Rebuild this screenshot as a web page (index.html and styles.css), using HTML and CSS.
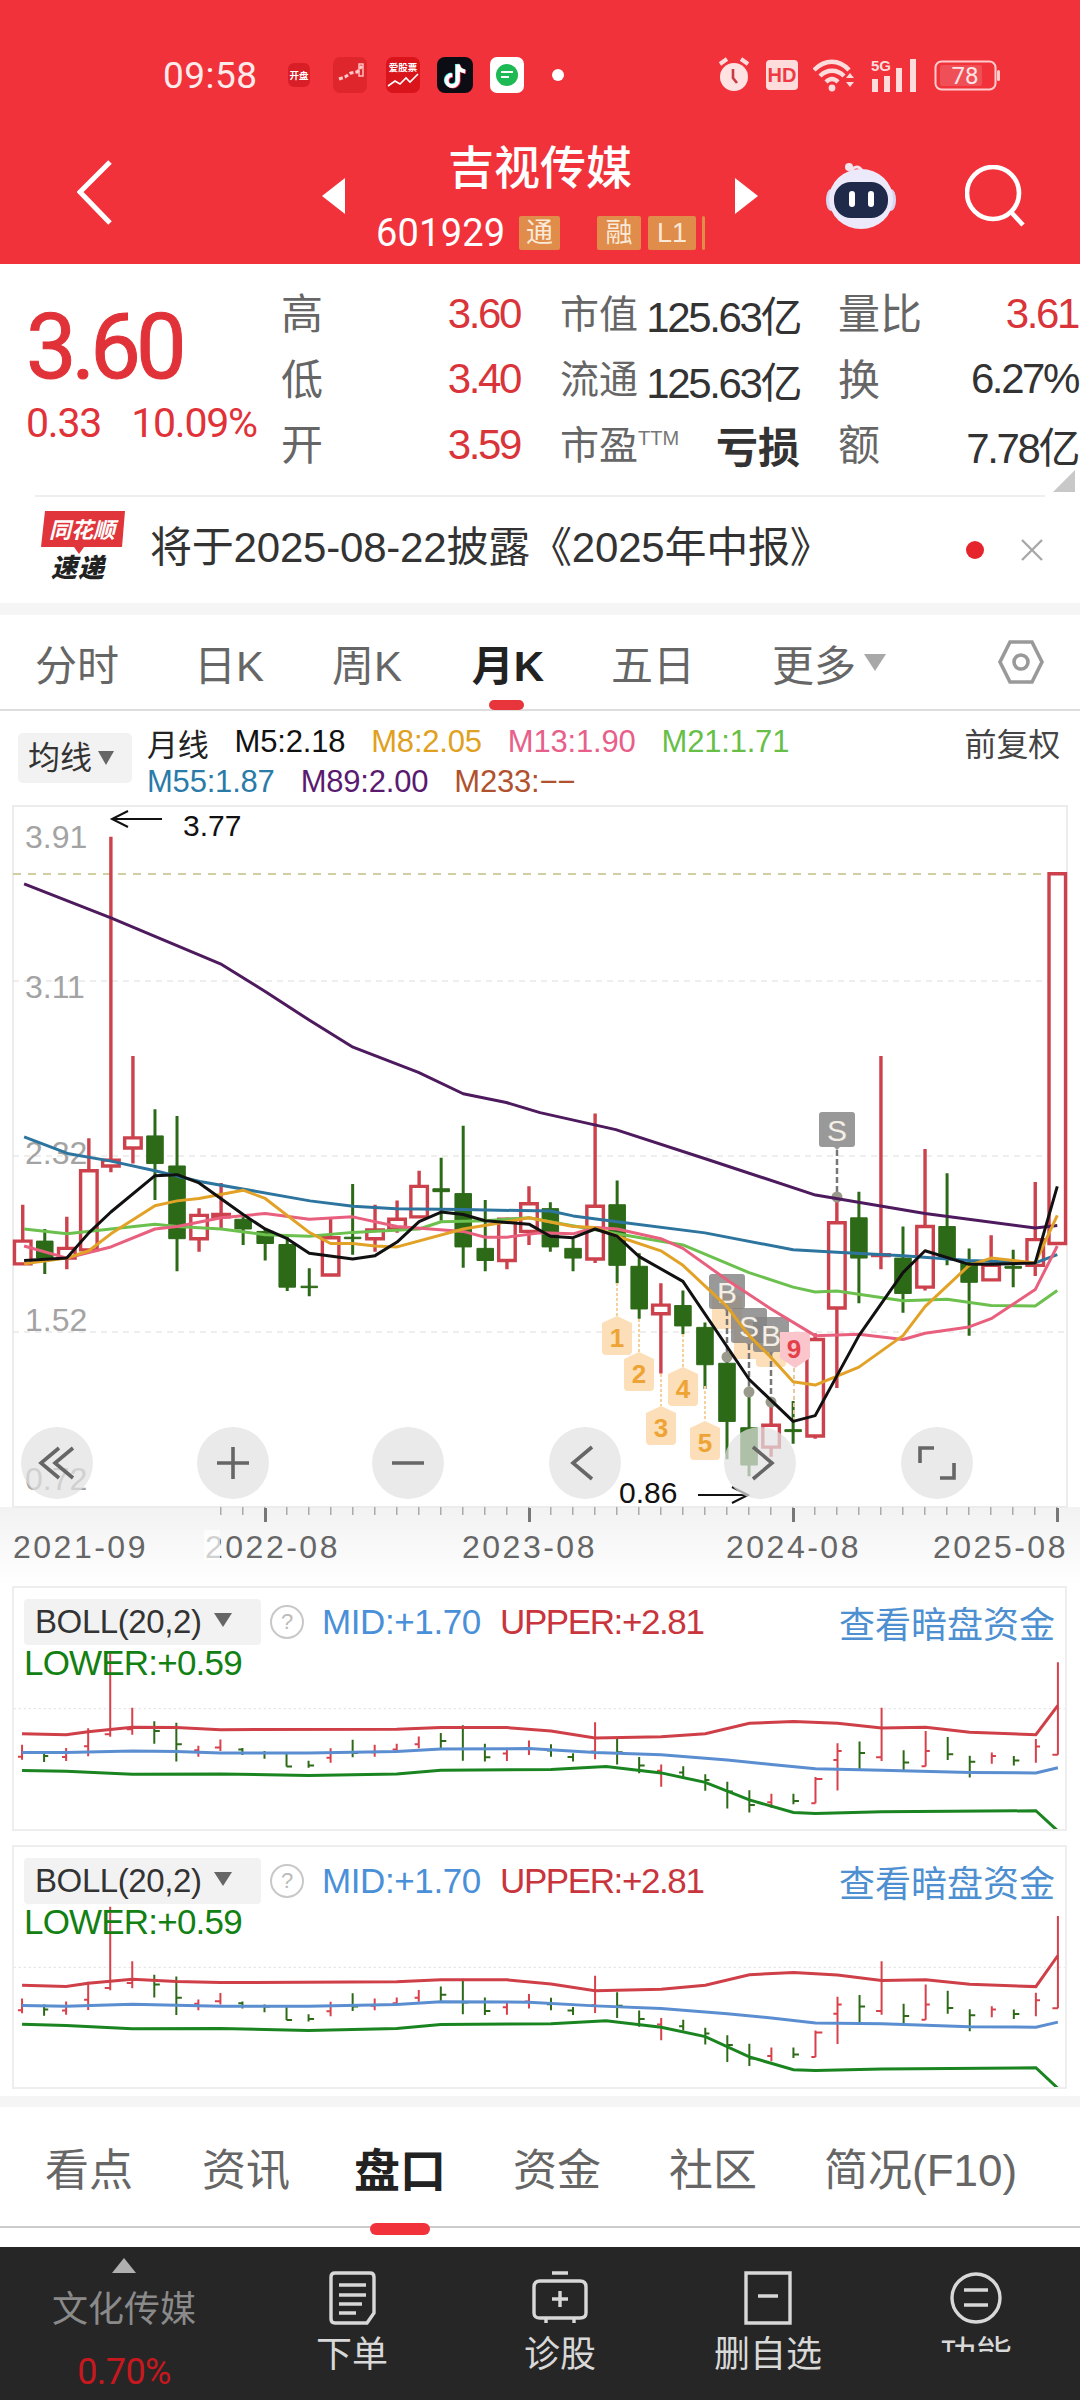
FILE: index.html
```html
<!DOCTYPE html>
<html lang="zh">
<head>
<meta charset="utf-8">
<title>吉视传媒</title>
<link rel="stylesheet" href="styles.css">
</head>
<body>
<div class="page">

<header class="head">
  <div class="status">
    <span class="time">09:58</span>
    <svg class="app a1" viewBox="0 0 22 24"><rect width="22" height="24" rx="6" fill="#d81e26"/><text class="apptxt" x="11" y="16" font-size="9.5">开盘</text></svg>
    <svg class="app a2" viewBox="0 0 34 36"><rect width="34" height="36" rx="7" fill="#e0262d"/><path class="spark" d="M6 22l6-2 6-4 6-1 5-6"/><rect x="26" y="7" width="4" height="12" class="sparkbox"/></svg>
    <svg class="app a3" viewBox="0 0 34 36"><rect width="34" height="36" rx="7" fill="#d9141b"/><text class="apptxt" x="17" y="14" font-size="9.5">爱股票</text><path class="spark2" d="M2 29l7-5 5 3 6-6 4 4 8-8"/></svg>
    <svg class="app a4" viewBox="0 0 36 36"><rect width="36" height="36" rx="8" fill="#0c0c14"/><path class="tk1" d="M20 7v16a5.6 5.6 0 1 1-5.6-5.6M20 7c.6 4 3.4 6.6 7.4 7"/><path class="tk2" d="M21.6 8v16a5.6 5.6 0 1 1-5.6-5.6M21.6 8c.6 4 3.4 6.6 7.4 7"/><path class="tk3" d="M20.8 7.5v16a5.6 5.6 0 1 1-5.6-5.6M20.8 7.5c.6 4 3.4 6.6 7.4 7"/></svg>
    <svg class="app a5" viewBox="0 0 34 36"><rect width="34" height="36" rx="7" fill="#fff"/><circle cx="17" cy="18" r="11" fill="#1db954"/><path class="gl" d="M11 15h12M11 20h8"/></svg>
    <i class="dot"></i>
    <div class="sys">
      <svg class="alarm" viewBox="0 0 34 36"><path class="alarm-h" d="M3 7l7-5M31 7l-7-5"/><circle cx="17" cy="20" r="14" fill="#ffe2e2"/><path class="alarm-p" d="M16 12v9l4 5"/></svg>
      <svg class="hd" viewBox="0 0 32 30"><rect width="32" height="30" rx="4" fill="#ffdcdc"/><text class="hdtxt" x="16" y="22">HD</text></svg>
      <svg class="wifi" viewBox="0 0 43 34"><path class="wf" d="M1 12c11-11 25-11 35 0M7 18c7-7 17-7 24 0M13 24c4-4 8-4 12 0"/><circle cx="19" cy="30" r="3.4" fill="#ffdcdc"/><path d="M33 20h8l-4-5zM33 24h8l-4 5z" fill="#ffdcdc"/></svg>
      <svg class="signal" viewBox="0 0 48 34"><text class="fg" x="0" y="13">5G</text><path class="bars" d="M4 34V21M16 34V18M28 34V10M42 34V1"/></svg>
      <svg class="batt" viewBox="0 0 66 31"><rect x="1.5" y="1.5" width="60" height="28" rx="6" class="batt-o"/><rect x="6" y="5" width="42" height="21" rx="2" fill="#ef5058"/><rect x="63" y="10" width="3" height="11" rx="1.5" fill="#ffcccc"/><text class="batt-t" x="31" y="24">78</text></svg>
    </div>
  </div>
  <div class="nav">
    <svg class="back" viewBox="0 0 35 65"><path d="M33 2L3 32l30 31"/></svg>
    <i class="tri tri-l"></i>
    <div class="center">
      <div class="title">吉视传媒</div>
      <div class="coderow">
        <span class="code">601929</span>
        <span class="bdg b-tong">通</span>
        <span class="bdg b-rong">融</span>
        <span class="bdg b-l1">L1</span>
        <span class="bdg b-end"></span>
      </div>
    </div>
    <i class="tri tri-r"></i>
    <svg class="robot" viewBox="0 0 72 70">
      <path class="ant" d="M27 13c-1-7 8-8 10-2"/><circle cx="24" cy="7" r="4" fill="#f4e4ee"/>
      <ellipse cx="6" cy="40" rx="5" ry="11" fill="#d9d6f0"/><ellipse cx="66" cy="40" rx="5" ry="11" fill="#d9d6f0"/>
      <ellipse cx="36" cy="39" rx="32" ry="30" fill="#ece9fa"/>
      <rect x="9" y="22" width="54" height="36" rx="17" fill="#1f2a4a"/>
      <rect x="24" y="31" width="6" height="16" rx="3" fill="#fff"/><rect x="43" y="31" width="6" height="16" rx="3" fill="#fff"/>
    </svg>
    <svg class="search" viewBox="0 0 60 62"><circle cx="28" cy="28" r="26"/><path d="M46 47l12 13"/></svg>
  </div>
</header>

<section class="quote">
  <div class="price">
    <div class="big">3.60</div>
    <div class="chg"><span>0.33</span><span>10.09%</span></div>
  </div>
  <div class="stats">
    <span class="k">高</span><span class="v red">3.60</span><span class="k2">市值</span><span class="v">125.63亿</span><span class="k3">量比</span><span class="v red">3.61</span>
    <span class="k">低</span><span class="v red">3.40</span><span class="k2">流通</span><span class="v">125.63亿</span><span class="k3">换</span><span class="v">6.27%</span>
    <span class="k">开</span><span class="v red">3.59</span><span class="k2">市盈<sup class="ttm">TTM</sup></span><span class="v strong">亏损</span><span class="k3">额</span><span class="v">7.78亿</span>
  </div>
  <i class="corner"></i>
</section>

<section class="promo">
  <svg class="logo" viewBox="0 0 90 74"><path d="M7 0h80l-3 36H46l-5 7-5-7H3z" fill="#e0353a"/><text class="lg1" x="44" y="27">同花顺</text><text class="lg2" x="40" y="66">速递</text></svg>
  <span class="promo-t">将于2025-08-22披露《2025年中报》</span>
  <i class="reddot"></i>
  <svg class="close" viewBox="0 0 24 24"><path d="M2 2l20 20M22 2L2 22"/></svg>
</section>
<div class="gap"></div>

<nav class="tabs">
  <span class="tab">分时</span>
  <span class="tab">日K</span>
  <span class="tab">周K</span>
  <span class="tab on">月K</span>
  <span class="tab">五日</span>
  <span class="tab more">更多<i class="drop"></i></span>
  <svg class="gear" viewBox="0 0 46 46"><path d="M12 3h22l10 20-10 20H12L2 23z"/><circle cx="23" cy="23" r="7"/></svg>
</nav>

<section class="legend">
  <div class="ma-btn">均线<i class="drop small"></i></div>
  <div class="ma-rows">
    <div class="ma-row"><span class="ma-n">月线</span><span class="c5">M5:2.18</span><span class="c8">M8:2.05</span><span class="c13">M13:1.90</span><span class="c21">M21:1.71</span><span class="fq">前复权</span></div>
    <div class="ma-row"><span class="c55">M55:1.87</span><span class="c89">M89:2.00</span><span class="c233">M233:−−</span></div>
  </div>
</section>

<section class="main">
<svg class="mainsvg" viewBox="0 805 1080 781">
  <defs>
    <linearGradient id="strip" x1="0" y1="0" x2="0" y2="1"><stop offset="0" stop-color="#f2f2f2"/><stop offset="1" stop-color="#ffffff"/></linearGradient>
    <path id="tag" d="M0-20L15-13V15Q15 19 11 19H-11Q-15 19-15 15V-13z"/>
    <path id="mark" d="M-15-18H15Q18-18 18-15V14Q18 17 15 17H3L0 20-3 17H-15Q-18 17-18 14V-15Q-18-18-15-18z"/>
  </defs>
  <rect class="strip" x="0" y="1507" width="1080" height="79"/>
  <rect class="frame" x="13" y="806" width="1054" height="701"/>
  <line class="g-top" x1="13" y1="874" x2="1067" y2="874"/>
  <line class="g" x1="13" y1="981" x2="1067" y2="981"/>
  <line class="g" x1="13" y1="1156" x2="1067" y2="1156"/>
  <line class="g" x1="13" y1="1332" x2="1067" y2="1332"/>
  <text class="yl" x="25" y="848">3.91</text>
  <text class="yl" x="25" y="998">3.11</text>
  <text class="yl" x="25" y="1164">2.32</text>
  <text class="yl" x="25" y="1331">1.52</text>
  <text class="yl" x="25" y="1490">0.72</text>

  <g transform="translate(0 800) scale(.34439 .48473)">
    <path class="wick-r" d="M66 835V957M194 860V968M258 698V930M322 76V768M386 528V750M578 842V932M642 790V885M960 862V982M1089 835V932M1153 826V893M1217 765V862M1472 862V968M1536 797V918M1728 647V955M1919 997V1183M2239 1240V1355M2367 1100V1318M2430 820V1213M2558 528V968M2686 720V1012M2878 898V992M3006 788V982"/>
    <path class="body-r" d="M42 910H90V957H42ZM170 925H218V945H170ZM234 765H282V928H234ZM298 743H346V755H298ZM362 697H410V718H362ZM554 857H602V905H554ZM618 855H666V860H618ZM936 903H984V980H936ZM1065 887H1113V905H1065ZM1129 865H1177V885H1129ZM1193 797H1241V860H1193ZM1448 865H1496V950H1448ZM1512 833H1560V890H1512ZM1704 838H1752V947H1704ZM1895 1042H1943V1060H1895ZM2215 1290H2263V1335H2215ZM2343 1113H2391V1312H2343ZM2406 872H2454V1048H2406ZM2534 938H2582V940H2534ZM2662 880H2710V1005H2662ZM2854 960H2902V990H2854ZM2982 907H3030V960H2982ZM3046 152H3094V915H3046Z"/>
    <path class="wick-g" d="M130 885V978M450 638V825M514 652V972M706 860V918M770 885V950M834 900V1013M898 966V1024M1024 792V938M1281 738V868M1345 672V965M1409 825V972M1598 830V932M1664 905V972M1792 785V997M1856 935V1070M1983 1012V1102M2047 1078V1215M2111 1140V1360M2175 1210V1395M2303 1240V1328M2494 808V1038M2622 880V1058M2750 770V960M2814 925V1105M2942 928V1005"/>
    <path class="body-g" d="M106 910H154V945H106ZM426 693H474V750H426ZM490 755H538V905H490ZM682 865H730V885H682ZM746 890H794V915H746ZM810 917H858V1005H810ZM874 1003H922V1006H874ZM1000 902H1048V905H1000ZM1257 802H1305V808H1257ZM1321 812H1369V922H1321ZM1385 925H1433V950H1385ZM1574 843H1622V922H1574ZM1640 925H1688V945H1640ZM1768 835H1816V960H1768ZM1832 962H1880V1050H1832ZM1959 1043H2007V1085H1959ZM2023 1088H2071V1165H2023ZM2087 1162H2135V1282H2087ZM2151 1295H2199V1372H2151ZM2279 1299H2327V1303H2279ZM2470 862H2518V945H2470ZM2598 945H2646V1018H2598ZM2726 880H2774V945H2726ZM2790 955H2838V995H2790ZM2918 962H2966V966H2918Z"/>
  </g>

  <g class="dots">
    <path d="M617 1283V1316M639 1319V1352M661 1374V1406M683 1334V1367M705 1386V1421"/>
  </g>
  <g class="tags">
    <use href="#tag" x="617" y="1336"/><use href="#tag" x="639" y="1372"/><use href="#tag" x="661" y="1426"/><use href="#tag" x="683" y="1387"/><use href="#tag" x="705" y="1441"/>
    <use href="#tag" x="727" y="1310"/><use href="#tag" x="749" y="1340"/><use href="#tag" x="771" y="1348"/>
  </g>
  <g class="tagnum">
    <text x="617" y="1347">1</text><text x="639" y="1383">2</text><text x="661" y="1437">3</text><text x="683" y="1398">4</text><text x="705" y="1452">5</text>
  </g>
  <path class="dashg" d="M727 1310V1352M749 1344V1388M771 1352V1398M837 1150V1192"/>
  <path class="dashp" d="M794 1368V1420"/>
  <g class="gdot"><circle cx="727" cy="1357" r="5.5"/><circle cx="749" cy="1392" r="5.5"/><circle cx="771" cy="1402" r="5.5"/><circle cx="837" cy="1197" r="5.5"/></g>

  <g class="marks">
    <use href="#mark" x="727" y="1292"/><use href="#mark" x="749" y="1326"/><use href="#mark" x="771" y="1335"/><use href="#mark" x="837" y="1130"/>
  </g>
  <path class="pink" d="M780 1332H810V1358L795 1368 780 1358z"/>
  <g class="marktxt">
    <text x="727" y="1303">B</text><text x="749" y="1337">S</text><text x="771" y="1346">B</text><text x="837" y="1141">S</text>
  </g>
  <text class="nine" x="794" y="1358">9</text>

  <g transform="translate(0 800) scale(.34439 .48473)" class="lines">
    <polyline class="m89" points="70,173 322,243 640,338 770,395 900,455 1025,510 1215,562 1345,606 1470,624 1568,645 1788,680 2048,740 2368,815 2686,853 3006,883 3070,878"/>
    <polyline class="m55" points="70,695 200,730 322,745 450,765 580,787 900,827 1025,838 1150,843 1345,845 1598,848 1664,858 1792,870 2047,893 2303,928 2430,933 2622,940 2814,950 3006,955 3070,938"/>
    <polyline class="m21" points="70,885 194,895 322,885 450,875 514,880 642,885 770,897 898,900 1024,892 1217,885 1281,870 1409,868 1536,862 1598,870 1792,895 1983,918 2175,975 2303,1005 2367,1015 2430,1013 2622,1033 2750,1030 2878,1043 3006,1044 3070,1012"/>
    <polyline class="m13" points="70,920 194,945 322,922 450,885 514,880 642,862 770,853 898,865 1024,860 1153,880 1345,890 1409,902 1472,902 1568,893 1664,895 1728,882 1792,885 1919,905 1983,925 2111,990 2239,1050 2367,1105 2494,1102 2622,1113 2686,1100 2814,1087 2878,1070 3006,1010 3070,920"/>
    <polyline class="m8" points="70,957 194,945 258,930 322,895 450,837 514,827 578,822 706,805 770,822 898,892 960,915 1024,915 1089,920 1153,922 1345,885 1472,870 1536,862 1664,880 1728,882 1792,900 1919,930 1983,960 2111,1045 2175,1105 2239,1150 2303,1200 2367,1207 2494,1170 2622,1105 2686,1045 2814,960 2878,945 3006,955 3070,857"/>
    <polyline class="m5" points="70,950 194,945 258,893 322,850 450,775 514,773 578,790 706,855 770,885 834,905 898,935 1024,947 1089,940 1153,912 1217,870 1281,850 1345,855 1409,868 1536,875 1598,900 1664,903 1728,885 1792,900 1856,942 1983,993 2175,1195 2303,1282 2367,1270 2494,1105 2622,975 2686,930 2814,958 2878,958 3006,955 3070,797"/>
  </g>

  <path class="arrow" d="M162 819H112M128 811L112 819 128 827"/>
  <text class="px" x="183" y="836">3.77</text>
  <text class="px" x="619" y="1503">0.86</text>
  <path class="arrow" d="M698 1495H748M732 1487L748 1495 732 1503"/>

  <line class="minor" x1="220" y1="1511" x2="1060" y2="1511"/>
  <line class="major" x1="264" y1="1515" x2="1060" y2="1515"/>
  <text class="xl" x="13" y="1558">2021-09</text>
  <text class="xl" x="205" y="1558">2022-08</text>
  <rect class="fade" x="204" y="1530" width="16" height="30"/>
  <text class="xl" x="462" y="1558">2023-08</text>
  <text class="xl" x="726" y="1558">2024-08</text>
  <text class="xl" x="933" y="1558">2025-08</text>

  <g class="rb">
    <circle cx="57" cy="1463" r="36"/><circle cx="233" cy="1463" r="36"/><circle cx="408" cy="1463" r="36"/><circle cx="585" cy="1463" r="36"/><circle cx="760" cy="1463" r="36"/><circle cx="937" cy="1463" r="36"/>
  </g>
  <path class="rbi" d="M59 1448L41 1463 59 1478M73 1448L55 1463 73 1478M217 1463H249M233 1447V1479M392 1463H424M592 1447L573 1463 592 1479M753 1447L772 1463 753 1479M920 1463V1448H934M954 1463V1478H940"/>
</svg>
</section>

<section class="panel p1">
  <svg class="pchart" viewBox="20.3 53 1526 713" preserveAspectRatio="none">
    <defs>
      <g id="mini">
        <path class="mw-r" d="M32 517V561M32 552h-6M96 526V565M96 553h-6M128 468V551M128 521h-6M160 246V493M160 486h-8M192 407V487M192 471h-8M288 520V552M288 533h-6M320 501V535M320 525h-8M480 527V570M480 555h-6M544 517V552M544 539h-6M576 514V538M576 531h-6M608 492V527M608 515h-6M736 527V565M736 543h-6M768 504V547M768 526h-6M864 450V560M864 537h-6M960 575V641M960 594h-6M1120 662V703M1120 687h-6M1184 612V690M1184 618h10M1184 690h-6M1216 512V652M1216 535h6M1216 562h-6M1280 407V565M1280 554h-8M1344 476V580M1344 535h6M1344 580h-6M1440 540V573M1440 550h6M1504 500V570M1504 522h6M1536 273V546M1536 546h-8"/>
        <path class="mw-g" d="M64 535V568M64 550h6M224 447V514M224 476h8M256 452V566M256 515h8M352 526V547M352 531h-6M384 535V558M384 541h8M416 540V581M416 581h8M448 564V585M448 578h8M512 502V554M512 541h8M640 482V529M640 506h8M672 459V564M672 529h8M704 514V566M704 554h8M800 515V552M800 534h-6M832 542V566M832 553h-8M896 499V575M896 539h8M928 553V601M928 578h8M992 580V612M992 599h-6M1024 604V653M1024 621h6M1056 626V705M1056 655h8M1088 651V717M1088 695h8M1152 662V693M1152 683h8M1248 507V590M1248 541h8M1312 533V597M1312 569h8M1376 494V562M1376 545h8M1408 549V614M1408 567h8M1472 550V578M1472 563h8"/>
      </g>
    </defs>
    <line class="pg" x1="20" y1="410" x2="1546" y2="410"/>
    <use href="#mini"/>
    <polyline class="lr" points="32,484 96,487 128,478 192,465 256,466 320,472 576,471 640,466 736,466 800,476 864,497 960,493 1024,484 1088,453 1152,448 1216,453 1280,467 1344,465 1408,480 1504,487 1536,400"/>
    <polyline class="lb" points="32,540 96,540 192,535 256,537 320,541 448,541 576,537 640,529 768,528 864,540 960,546 1056,562 1120,575 1184,588 1280,592 1408,599 1504,600 1536,585"/>
    <polyline class="lg" points="32,593 96,595 192,604 320,603 448,608 576,603 640,592 800,590 880,581 960,600 1024,628 1088,680 1152,717 1184,720 1280,715 1504,712 1536,772"/>
  </svg>
  <div class="pinfo">
    <div class="prow">
      <div class="boll">BOLL(20,2)<i class="drop small2"></i></div>
      <span class="q">?</span>
      <span class="mid">MID:+1.70</span>
      <span class="up">UPPER:+2.81</span>
      <span class="dark">查看暗盘资金</span>
    </div>
    <div class="low">LOWER:+0.59</div>
  </div>
</section>

<section class="panel p2">
  <svg class="pchart" viewBox="20.3 819 1526 710" preserveAspectRatio="none">
    <line class="pg" x1="20" y1="1175" x2="1546" y2="1175"/>
    <use href="#mini" y="750"/>
    <polyline class="lr" points="32,1228 96,1232 128,1222 192,1210 256,1217 320,1220 576,1218 640,1212 736,1212 800,1224 864,1244 960,1240 1024,1228 1088,1197 1152,1190 1216,1198 1280,1214 1344,1212 1408,1225 1504,1232 1536,1140"/>
    <polyline class="lb" points="32,1288 96,1290 192,1284 256,1287 320,1290 448,1290 576,1285 640,1277 768,1278 864,1289 960,1297 1056,1312 1120,1325 1184,1340 1280,1342 1408,1351 1504,1352 1536,1337"/>
    <polyline class="lg" points="32,1343 96,1347 192,1357 320,1356 448,1362 576,1356 640,1344 800,1342 880,1333 960,1352 1024,1380 1088,1440 1152,1478 1184,1480 1280,1476 1504,1472 1536,1533"/>
  </svg>
  <div class="pinfo">
    <div class="prow">
      <div class="boll">BOLL(20,2)<i class="drop small2"></i></div>
      <span class="q">?</span>
      <span class="mid">MID:+1.70</span>
      <span class="up">UPPER:+2.81</span>
      <span class="dark">查看暗盘资金</span>
    </div>
    <div class="low">LOWER:+0.59</div>
  </div>
</section>

<div class="gap2"></div>

<nav class="btabs">
  <span class="bt">看点</span>
  <span class="bt">资讯</span>
  <span class="bt on">盘口</span>
  <span class="bt">资金</span>
  <span class="bt">社区</span>
  <span class="bt">简况(F10)</span>
</nav>
<div class="btgap"></div>

<footer class="foot">
  <div class="f0">
    <i class="up-tri"></i>
    <div class="f0-name">文化传媒</div>
    <div class="f0-pct">0.70%</div>
  </div>
  <div class="fi">
    <svg class="fic" viewBox="0 0 47 54"><path d="M6 2H41Q45 2 45 6V42L38 52H6Q2 52 2 48V6Q2 2 6 2z"/><path d="M10 14H37M10 24H37M10 33H33M10 42H27"/></svg>
    <span>下单</span>
  </div>
  <div class="fi">
    <svg class="fic" viewBox="0 0 56 54"><path d="M20 2H36M8 10H48Q54 10 54 16V42Q54 47 48 47H8Q2 47 2 42V16Q2 10 8 10zM14 47V52M42 47V52M28 20V36M20 28H36"/></svg>
    <span>诊股</span>
  </div>
  <div class="fi">
    <svg class="fic" viewBox="0 0 48 54"><path d="M2 2H46V52H2zM14 25H34"/></svg>
    <span>删自选</span>
  </div>
  <div class="fi">
    <svg class="fic" viewBox="0 0 52 54"><circle cx="26" cy="27" r="24"/><path d="M14 19H38M14 34H38"/></svg>
    <span>功能</span>
  </div>
  <i class="footmask"></i>
</footer>

</div>
</body>
</html>
```

FILE: styles.css
```css
* { box-sizing: border-box; }
html, body { margin: 0; padding: 0; background: #fff; }
body { font-family: "Liberation Sans", "Noto Sans CJK SC", sans-serif; color: #333; }
.page { width: 1080px; height: 2400px; overflow: hidden; position: relative; }
i { display: block; font-style: normal; }

/* header */
.head { height: 264px; background: #f1323b; color: #fff; }
.status { height: 100px; padding-top: 50px; display: flex; align-items: center; padding-left: 163px; }
.time { font: 37px "Roboto", sans-serif; color: #fdeaea; width: 95px; white-space: nowrap; letter-spacing: .5px; }
.app { display: block; flex: none; }
.a1 { width: 22px; height: 24px; margin-left: 30px; }
.a2 { width: 34px; height: 36px; margin-left: 23px; }
.a3 { width: 34px; height: 36px; margin-left: 19px; }
.a4 { width: 36px; height: 36px; margin-left: 17px; }
.a5 { width: 34px; height: 36px; margin-left: 17px; }
.apptxt { fill: #fff; text-anchor: middle; font-family: "Noto Sans CJK SC", sans-serif; font-weight: 700; }
.spark { fill: none; stroke: #ffc9c9; stroke-width: 3; stroke-dasharray: 4 2; }
.sparkbox { fill: none; stroke: #ffc9c9; stroke-width: 1.4; }
.spark2 { fill: none; stroke: #fff; stroke-width: 1.6; }
.tk1, .tk2, .tk3 { fill: none; stroke-width: 4; }
.tk1 { stroke: #25f4ee; }
.tk2 { stroke: #fe2c55; }
.tk3 { stroke: #fff; }
.gl { stroke: #fff; stroke-width: 2; fill: none; }
.dot { width: 12px; height: 12px; border-radius: 50%; background: #fff; margin-left: 28px; }
.sys { margin-left: auto; margin-right: 80px; display: flex; align-items: center; gap: 15px; }
.alarm { width: 34px; height: 36px; }
.alarm-h { stroke: #ffdcdc; stroke-width: 4; fill: none; }
.alarm-p { stroke: #c93c44; stroke-width: 2.6; fill: none; }
.hd { width: 32px; height: 30px; }
.hdtxt { font: 700 20px "Liberation Sans", sans-serif; fill: #ee3a42; text-anchor: middle; }
.wifi { width: 43px; height: 34px; }
.wf { fill: none; stroke: #ffdcdc; stroke-width: 4.4; }
.signal { width: 48px; height: 34px; }
.fg { font: 700 15px "Liberation Sans", sans-serif; fill: #ffdcdc; }
.bars { stroke: #ffdcdc; stroke-width: 6; fill: none; }
.batt { width: 66px; height: 31px; }
.batt-o { fill: none; stroke: #ffcccc; stroke-width: 2; }
.batt-t { font: 24px "Roboto", sans-serif; fill: #ffe5e5; text-anchor: middle; }

.nav { height: 164px; display: flex; align-items: flex-start; }
.back { width: 35px; height: 65px; margin: 60px 0 0 77px; flex: none; fill: none; stroke: #fff; stroke-width: 5; }
.tri { width: 0; height: 0; flex: none; margin-top: 78px; border-top: 18px solid transparent; border-bottom: 18px solid transparent; }
.tri-l { margin-left: 210px; border-right: 23px solid #fff; }
.tri-r { border-left: 23px solid #fff; }
.center { width: 390px; flex: none; margin-top: 40px; }
.title { font-size: 46px; line-height: 56px; text-align: center; font-weight: 500; }
.coderow { display: flex; align-items: center; height: 34px; margin-top: 20px; padding-left: 31px; }
.code { width: 143px; font: 38px "Roboto", sans-serif; letter-spacing: .2px; flex: none; }
.bdg { height: 34px; background: #e08c4a; color: #fbe9d8; border-radius: 2px; font-size: 27px; line-height: 34px; text-align: center; flex: none; overflow: hidden; }
.b-tong { width: 41px; }
.b-rong { width: 44px; margin-left: 37px; }
.b-l1 { width: 48px; margin-left: 7px; }
.b-end { width: 3px; margin-left: 6px; }
.robot { width: 72px; height: 70px; margin: 60px 0 0 67px; flex: none; }
.ant { fill: none; stroke: #f4e4ee; stroke-width: 3; }
.search { width: 60px; height: 62px; margin: 65px 0 0 68px; flex: none; fill: none; stroke: #fff; stroke-width: 4.6; }

/* quote */
.quote { height: 231px; display: flex; position: relative; color: #333; }
.price { width: 281px; padding: 45px 0 0 26px; flex: none; }
.big { font: 400 90px/78px "Roboto", sans-serif; color: #e03238; letter-spacing: -5px; -webkit-text-stroke: 1px #e03238; height: 78px; overflow: visible; }
.chg { display: flex; gap: 30px; margin-top: 14px; font: 41px/44px "Roboto", sans-serif; color: #e03238; letter-spacing: -1.2px; white-space: nowrap; }
.stats { display: grid; grid-template-columns: 100px 139px 40px 92px 148px 38px 100px 140px; grid-auto-rows: 65.5px; margin-top: 17px; align-items: center; }
.k { font-size: 42px; color: #666; padding-bottom: 6px; }
.k2 { grid-column: 4; font-size: 39px; color: #666; white-space: nowrap; padding-bottom: 6px; }
.k3 { font-size: 42px; color: #666; grid-column: 7; padding-bottom: 6px; }
.k ~ .v:nth-child(6n+2) { grid-column: 2; }
.v { font-size: 42px; justify-self: end; white-space: nowrap; letter-spacing: -2.4px; color: #333; }
.v:nth-child(6n+4) { grid-column: 5; }
.v:nth-child(6n) { grid-column: 8; }
.red { color: #d9343a; }
.strong { font-weight: 700; letter-spacing: 0; font-size: 42px; }
.ttm { font-size: 20px; vertical-align: 14px; line-height: 0; color: #777; }
.corner { position: absolute; left: 1053px; top: 206px; width: 0; height: 0; border-left: 22px solid transparent; border-bottom: 22px solid #c8c8c8; }

/* promo */
.promo { height: 108px; margin: 0 35px; border-top: 2px solid #eee; display: flex; align-items: center; position: relative; }
.logo { width: 90px; height: 74px; margin: -4px 0 0 3px; flex: none; }
.lg1 { font: italic 700 22px "Noto Sans CJK SC", sans-serif; fill: #fff; text-anchor: middle; }
.lg2 { font: italic 900 26px "Noto Sans CJK SC", sans-serif; fill: #222; text-anchor: middle; letter-spacing: 1px; }
.promo-t { font-size: 42px; line-height: 48px; color: #333; margin: -4px 0 0 22px; white-space: nowrap; letter-spacing: -.2px; }
.reddot { width: 18px; height: 18px; border-radius: 50%; background: #e5252b; margin-left: auto; }
.close { width: 24px; height: 24px; margin: 0 1px 0 36px; flex: none; fill: none; stroke: #a8a8a8; stroke-width: 2.4; }
.gap { height: 12px; background: #f5f5f5; }

/* tabs */
.tabs { height: 96px; display: grid; grid-template-columns: 154px 150px 126px 156px 134px 188px 1fr; align-items: center; border-bottom: 2px solid #ddd; }
.tab { font-size: 42px; color: #666; text-align: center; display: flex; justify-content: center; align-items: center; position: relative; white-space: nowrap; }
.tab.more { padding-left: 30px; }
.tab.on { color: #222; font-weight: 700; }
.tab.on::after { content: ""; position: absolute; left: 59px; top: 68px; width: 35px; height: 10px; border-radius: 5px; background: #e8353c; }
.drop { width: 0; height: 0; margin-left: 8px; border-left: 11px solid transparent; border-right: 11px solid transparent; border-top: 17px solid #a8a8a8; }
.drop.small { display: inline-block; margin-left: 6px; vertical-align: 4px; border-left-width: 8px; border-right-width: 8px; border-top-width: 14px; border-top-color: #666; }
.drop.small2 { display: inline-block; margin-left: 12px; vertical-align: 6px; border-left-width: 9px; border-right-width: 9px; border-top-width: 14px; border-top-color: #666; }
.gear { width: 46px; height: 46px; margin-left: 90px; fill: none; stroke: #999; stroke-width: 3.6; }

/* legend */
.legend { height: 94px; display: flex; }
.ma-btn { width: 114px; height: 50px; margin: 22px 0 0 18px; background: #f2f2f2; border-radius: 5px; font-size: 32px; line-height: 50px; color: #333; padding-left: 10px; white-space: nowrap; }
.ma-rows { margin-left: 15px; flex: 1; padding-top: 11px; }
.ma-row { display: flex; gap: 26px; height: 40px; align-items: center; font-size: 31px; letter-spacing: -.2px; white-space: nowrap; }
.ma-n { font-size: 31px; color: #222; }
.c5 { color: #111; }
.c8 { color: #e0a020; }
.c13 { color: #e8608a; }
.c21 { color: #68bf48; }
.c55 { color: #2a7ba8; }
.c89 { color: #5a1a70; }
.c233 { color: #b0522e; }
.fq { margin-left: auto; margin-right: 20px; font-size: 32px; color: #444; }

/* main chart */
.main { height: 781px; }
.mainsvg { display: block; width: 1080px; height: 781px; }
.strip { fill: url(#strip); }
.frame { fill: #fff; stroke: #ececec; stroke-width: 2; }
.g-top { stroke: #c4bd84; stroke-width: 1.5; stroke-dasharray: 8 7; }
.g { stroke: #ddd; stroke-width: 1; stroke-dasharray: 6 5; }
.yl { font: 32px "Liberation Sans", sans-serif; fill: #a3a3a3; }
.wick-r, .wick-g, .body-r, .body-g, .lines polyline { vector-effect: non-scaling-stroke; }
.wick-r { stroke: #cc414b; stroke-width: 3.4; fill: none; }
.wick-g { stroke: #2d6a18; stroke-width: 3; fill: none; }
.body-r { fill: #fff; stroke: #cc414b; stroke-width: 3.4; }
.body-g { fill: #2d6a18; stroke: #2d6a18; stroke-width: 1; }
.lines polyline { fill: none; stroke-width: 3; stroke-linejoin: round; }
.m89 { stroke: #4e1a5e; }
.m55 { stroke: #2d759f; }
.m21 { stroke: #6cc04e; }
.m13 { stroke: #e8607e; }
.m8 { stroke: #e2a227; }
.m5 { stroke: #111; }
.dots { stroke: #f6cf9c; stroke-width: 2; stroke-dasharray: 3 2; fill: none; }
.tags { fill: #fcdfb8; }
.tagnum text { font: 700 26px "Liberation Sans", sans-serif; fill: #eea435; text-anchor: middle; }
.dashg { stroke: #777; stroke-width: 2.5; stroke-dasharray: 6 3; fill: none; }
.dashp { stroke: #e8c8a0; stroke-width: 2; stroke-dasharray: 4 3; fill: none; }
.gdot { fill: #9a9a8c; }
.marks { fill: rgba(130, 130, 130, .82); }
.marktxt text { font: 30px "Liberation Sans", sans-serif; fill: #f4efe6; text-anchor: middle; }
.pink { fill: #fbc6cb; }
.nine { font: 700 26px "Liberation Sans", sans-serif; fill: #e4404a; text-anchor: middle; }
.arrow { fill: none; stroke: #111; stroke-width: 2; }
.px { font: 30px "Liberation Sans", sans-serif; fill: #111; }
.minor { stroke: #aaa; stroke-width: 8; stroke-dasharray: 1.5 20.5; }
.major { stroke: #777; stroke-width: 14; stroke-dasharray: 3 261; }
.xl { font: 32px "Liberation Sans", sans-serif; fill: #666; letter-spacing: 2.5px; }
.fade { fill: rgba(255, 255, 255, .7); }
.rb { fill: rgba(226, 226, 226, .72); }
.rbi { fill: none; stroke: #666; stroke-width: 3.6; }

/* sub panels */
.panel { height: 245px; margin: 0 13px 14px 12px; border: 2px solid #eee; display: grid; }
.panel > * { grid-area: 1 / 1; }
.p2 { height: 244px; margin-bottom: 0; }
.pchart { width: 1051px; height: 100%; display: block; }
.pchart path, .pchart polyline, .pchart line { vector-effect: non-scaling-stroke; fill: none; }
.mw-r { stroke: #d8404a; stroke-width: 2; }
.mw-g { stroke: #2d6a18; stroke-width: 2; }
.pg { stroke: #ddd; stroke-width: 1; stroke-dasharray: 2 3; }
.lr { stroke: #cf3f48; stroke-width: 3; }
.lb { stroke: #5b8ed0; stroke-width: 3; }
.lg { stroke: #1a8420; stroke-width: 3; }
.pinfo { padding: 11px 0 0 10px; }
.prow { display: flex; align-items: center; height: 46px; font-size: 35px; letter-spacing: -.4px; white-space: nowrap; }
.boll { width: 237px; height: 46px; background: #f2f2f2; border-radius: 4px; padding-left: 11px; font-size: 33px; line-height: 46px; color: #333; white-space: nowrap; }
.q { width: 34px; height: 34px; margin-left: 9px; border: 2px solid #c8c8c8; border-radius: 50%; color: #bbb; font-size: 22px; line-height: 30px; text-align: center; letter-spacing: 0; }
.mid { margin-left: 18px; color: #4a90d9; width: 178px; }
.up { color: #c8353d; letter-spacing: -1.4px; }
.dark { margin-left: auto; margin-right: 10px; font-size: 36px; color: #4d8fd0; letter-spacing: 0; }
.low { font-size: 35px; color: #128012; line-height: 36px; margin-top: 0; letter-spacing: -.8px; }

/* bottom tabs */
.gap2 { height: 18px; border-bottom: 11px solid #f5f5f5; }
.btabs { height: 121px; border-bottom: 2px solid #ccc; display: grid; grid-template-columns: 178px 136px 172px 142px 170px 1fr; align-items: center; }
.bt { font-size: 44px; color: #666; text-align: center; white-space: nowrap; position: relative; }
.bt:last-child { text-align: left; padding-left: 26px; font-size: 44px; }
.bt.on { color: #222; font-weight: 700; font-size: 46px; }
.bt.on::after { content: ""; position: absolute; left: 56px; top: 89px; width: 60px; height: 12px; border-radius: 6px; background: #f1323b; }
.btgap { height: 19px; }

/* footer */
.foot { height: 153px; background: #262626; display: flex; position: relative; overflow: hidden; }
.f0 { width: 248px; flex: none; text-align: center; padding-top: 11px; }
.up-tri { width: 0; height: 0; margin: 0 auto; border-left: 12px solid transparent; border-right: 12px solid transparent; border-bottom: 15px solid #b0b0b0; }
.f0-name { font-size: 36px; line-height: 44px; color: #8a8a8a; margin-top: 15px; }
.f0-pct { font: 36px/40px "Roboto", sans-serif; color: #c8181f; margin-top: 20px; letter-spacing: -.6px; }
.fi { width: 208px; flex: none; display: flex; flex-direction: column; align-items: center; padding-top: 24px; color: #d8d8d8; font-size: 36px; line-height: 44px; }
.fi span { margin-top: 8px; white-space: nowrap; }
.fic { height: 54px; display: block; fill: none; stroke: #d8d8d8; stroke-width: 3.4; }
.footmask { position: absolute; left: 860px; top: 105px; width: 220px; height: 48px; background: #262626; }
```
